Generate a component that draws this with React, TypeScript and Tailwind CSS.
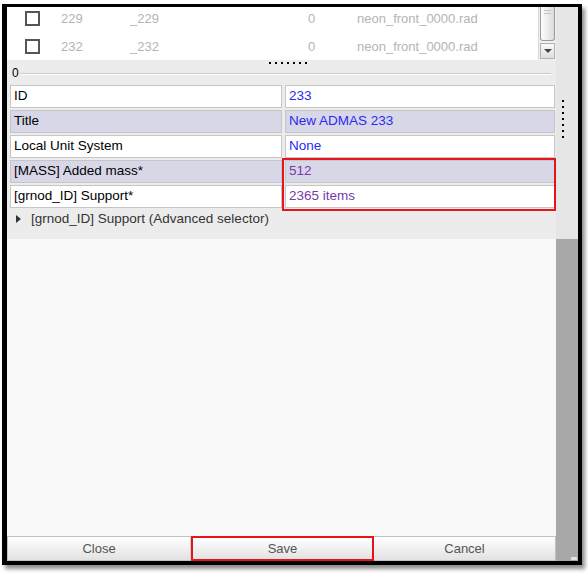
import React from "react";

const rows = [
  { label: "ID", value: "233", shade: false, purple: false },
  { label: "Title", value: "New ADMAS 233", shade: true, purple: false },
  { label: "Local Unit System", value: "None", shade: false, purple: false },
  { label: "[MASS] Added mass*", value: "512", shade: true, purple: true },
  { label: "[grnod_ID] Support*", value: "2365 items", shade: false, purple: true },
];

const listRows = [
  { id: "229", name: "_229" },
  { id: "232", name: "_232" },
];

const Dots = ({ vertical }: { vertical?: boolean }) => (
  <div className={vertical ? "flex flex-col gap-[4px]" : "flex gap-[4px]"}>
    {Array.from({ length: 7 }).map((_, i) => (
      <div key={i} className="w-[2px] h-[2px] bg-black" />
    ))}
  </div>
);

const App = () => {
  return (
    <div
      className="w-[588px] h-[574px] bg-white pt-[4px] pl-[2px]"
      style={{ fontFamily: '"Liberation Sans", Arial, sans-serif' }}
    >
      <div className="w-[580px] h-[561px] border-l-[5px] border-t-[3px] border-r-[4px] border-b-[4px] border-black shadow-[3px_4px_4px_rgba(0,0,0,0.45)] flex">
        {/* main column */}
        <div className="w-[549px] flex flex-col">
          {/* list */}
          <div className="h-[53px] flex bg-white">
            <div className="flex-1 flex flex-col text-[13px] text-[#b4b4b4]">
              {listRows.map((r, i) => (
                <div key={r.id} className={`h-[28px] flex items-center ${i === 0 ? "-mt-[2px]" : ""}`}>
                  <div className="ml-[18px] w-[15px] h-[15px] border-2 border-[#555]" />
                  <span className="ml-[21px] w-[69px]">{r.id}</span>
                  <span className="w-[178px]">{r.name}</span>
                  <span className="w-[49px]">0</span>
                  <span>neon_front_0000.rad</span>
                </div>
              ))}
            </div>
            {/* scrollbar */}
            <div className="w-[18px] flex flex-col border-l border-[#d8d8d8] bg-[#f0f0f0]">
              <div className="h-[34px] mx-[1px] rounded-b-[3px] border border-t-0 border-[#9a9a9a] bg-gradient-to-r from-[#fdfdfd] to-[#dcdcdc] flex justify-center pt-[3px]">
                <div className="w-[7px] h-[4px] border-y border-[#c4c4c4]" />
              </div>
              <div className="mt-[2px] h-[16px] mx-[1px] border border-[#b0b0b0] bg-gradient-to-b from-[#fafafa] to-[#dedede] flex items-center justify-center">
                <div className="w-0 h-0 border-l-[4px] border-r-[4px] border-t-[4px] border-l-transparent border-r-transparent border-t-[#444]" />
              </div>
            </div>
          </div>

          {/* property panel */}
          <div className="bg-[#ececec] flex flex-col pb-[10px]">
            <div className="h-[6px] flex justify-center items-center pl-[12px]">
              <Dots />
            </div>
            <div className="h-[13px] flex items-center px-[5px] text-[12px] text-black">
              <span className="leading-none">0</span>
              <div className="flex-1 h-[2px] ml-[1px] mt-[3px] border-t border-[#c8c8c8] border-b border-b-white" />
            </div>
            <div className="relative mt-[6px] ml-[3px] w-[545px] flex flex-col gap-[2px]">
              {rows.map((r) => (
                <div key={r.label} className="h-[23px] flex gap-[3px] text-[13.5px]">
                  <div
                    className={`w-[272px] border border-[#c6c6c6] flex items-center pl-[3px] text-black ${
                      r.shade ? "bg-[#d7d7e8]" : "bg-white"
                    }`}
                  >
                    {r.label}
                  </div>
                  <div
                    className={`flex-1 border border-[#c6c6c6] flex items-center pl-[3px] ${
                      r.shade ? "bg-[#d7d7e8]" : "bg-white"
                    } ${r.purple ? "text-[#7a3aa6]" : "text-[#2b2bf0]"}`}
                  >
                    {r.value}
                  </div>
                </div>
              ))}
              <div className="absolute left-[272px] top-[73px] w-[274px] h-[53px] border-2 border-[#e8141c]" />
            </div>
            <div className="mt-[1px] h-[20px] flex items-center pl-[9px] text-[13.5px] text-[#333]">
              <div className="w-0 h-0 border-t-[4px] border-b-[4px] border-l-[5px] border-t-transparent border-b-transparent border-l-[#333]" />
              <span className="ml-[10px]">[grnod_ID] Support (Advanced selector)</span>
            </div>
          </div>

          {/* empty area */}
          <div className="flex-1 bg-[#f9f9f9]" />

          {/* buttons */}
          <div className="h-[25px] flex text-[13px] text-[#555]">
            <div className="w-[184px] border-y border-[#c0c0c0] border-l border-r border-r-[#d0d0d0] bg-gradient-to-b from-white to-[#e2e2e2] flex items-center justify-center">
              Close
            </div>
            <div className="w-[183px] border-2 border-[#e8141c] bg-gradient-to-b from-white to-[#e2e2e2] flex items-center justify-center">
              Save
            </div>
            <div className="flex-1 border-y border-[#c0c0c0] border-r bg-gradient-to-b from-white to-[#e2e2e2] flex items-center justify-center">
              Cancel
            </div>
          </div>
        </div>

        {/* right strip */}
        <div className="flex-1 flex flex-col">
          <div className="h-[232px] bg-[#e6e6e6] flex flex-col items-start pt-[93px] pl-[6px]">
            <Dots vertical />
          </div>
          <div className="flex-1 bg-[#a8a8a8] flex items-end justify-end p-[1px]">
            <div className="w-[6px] h-[3px] bg-[#e0e0e0]" />
          </div>
        </div>
      </div>
    </div>
  );
};

export default App;
